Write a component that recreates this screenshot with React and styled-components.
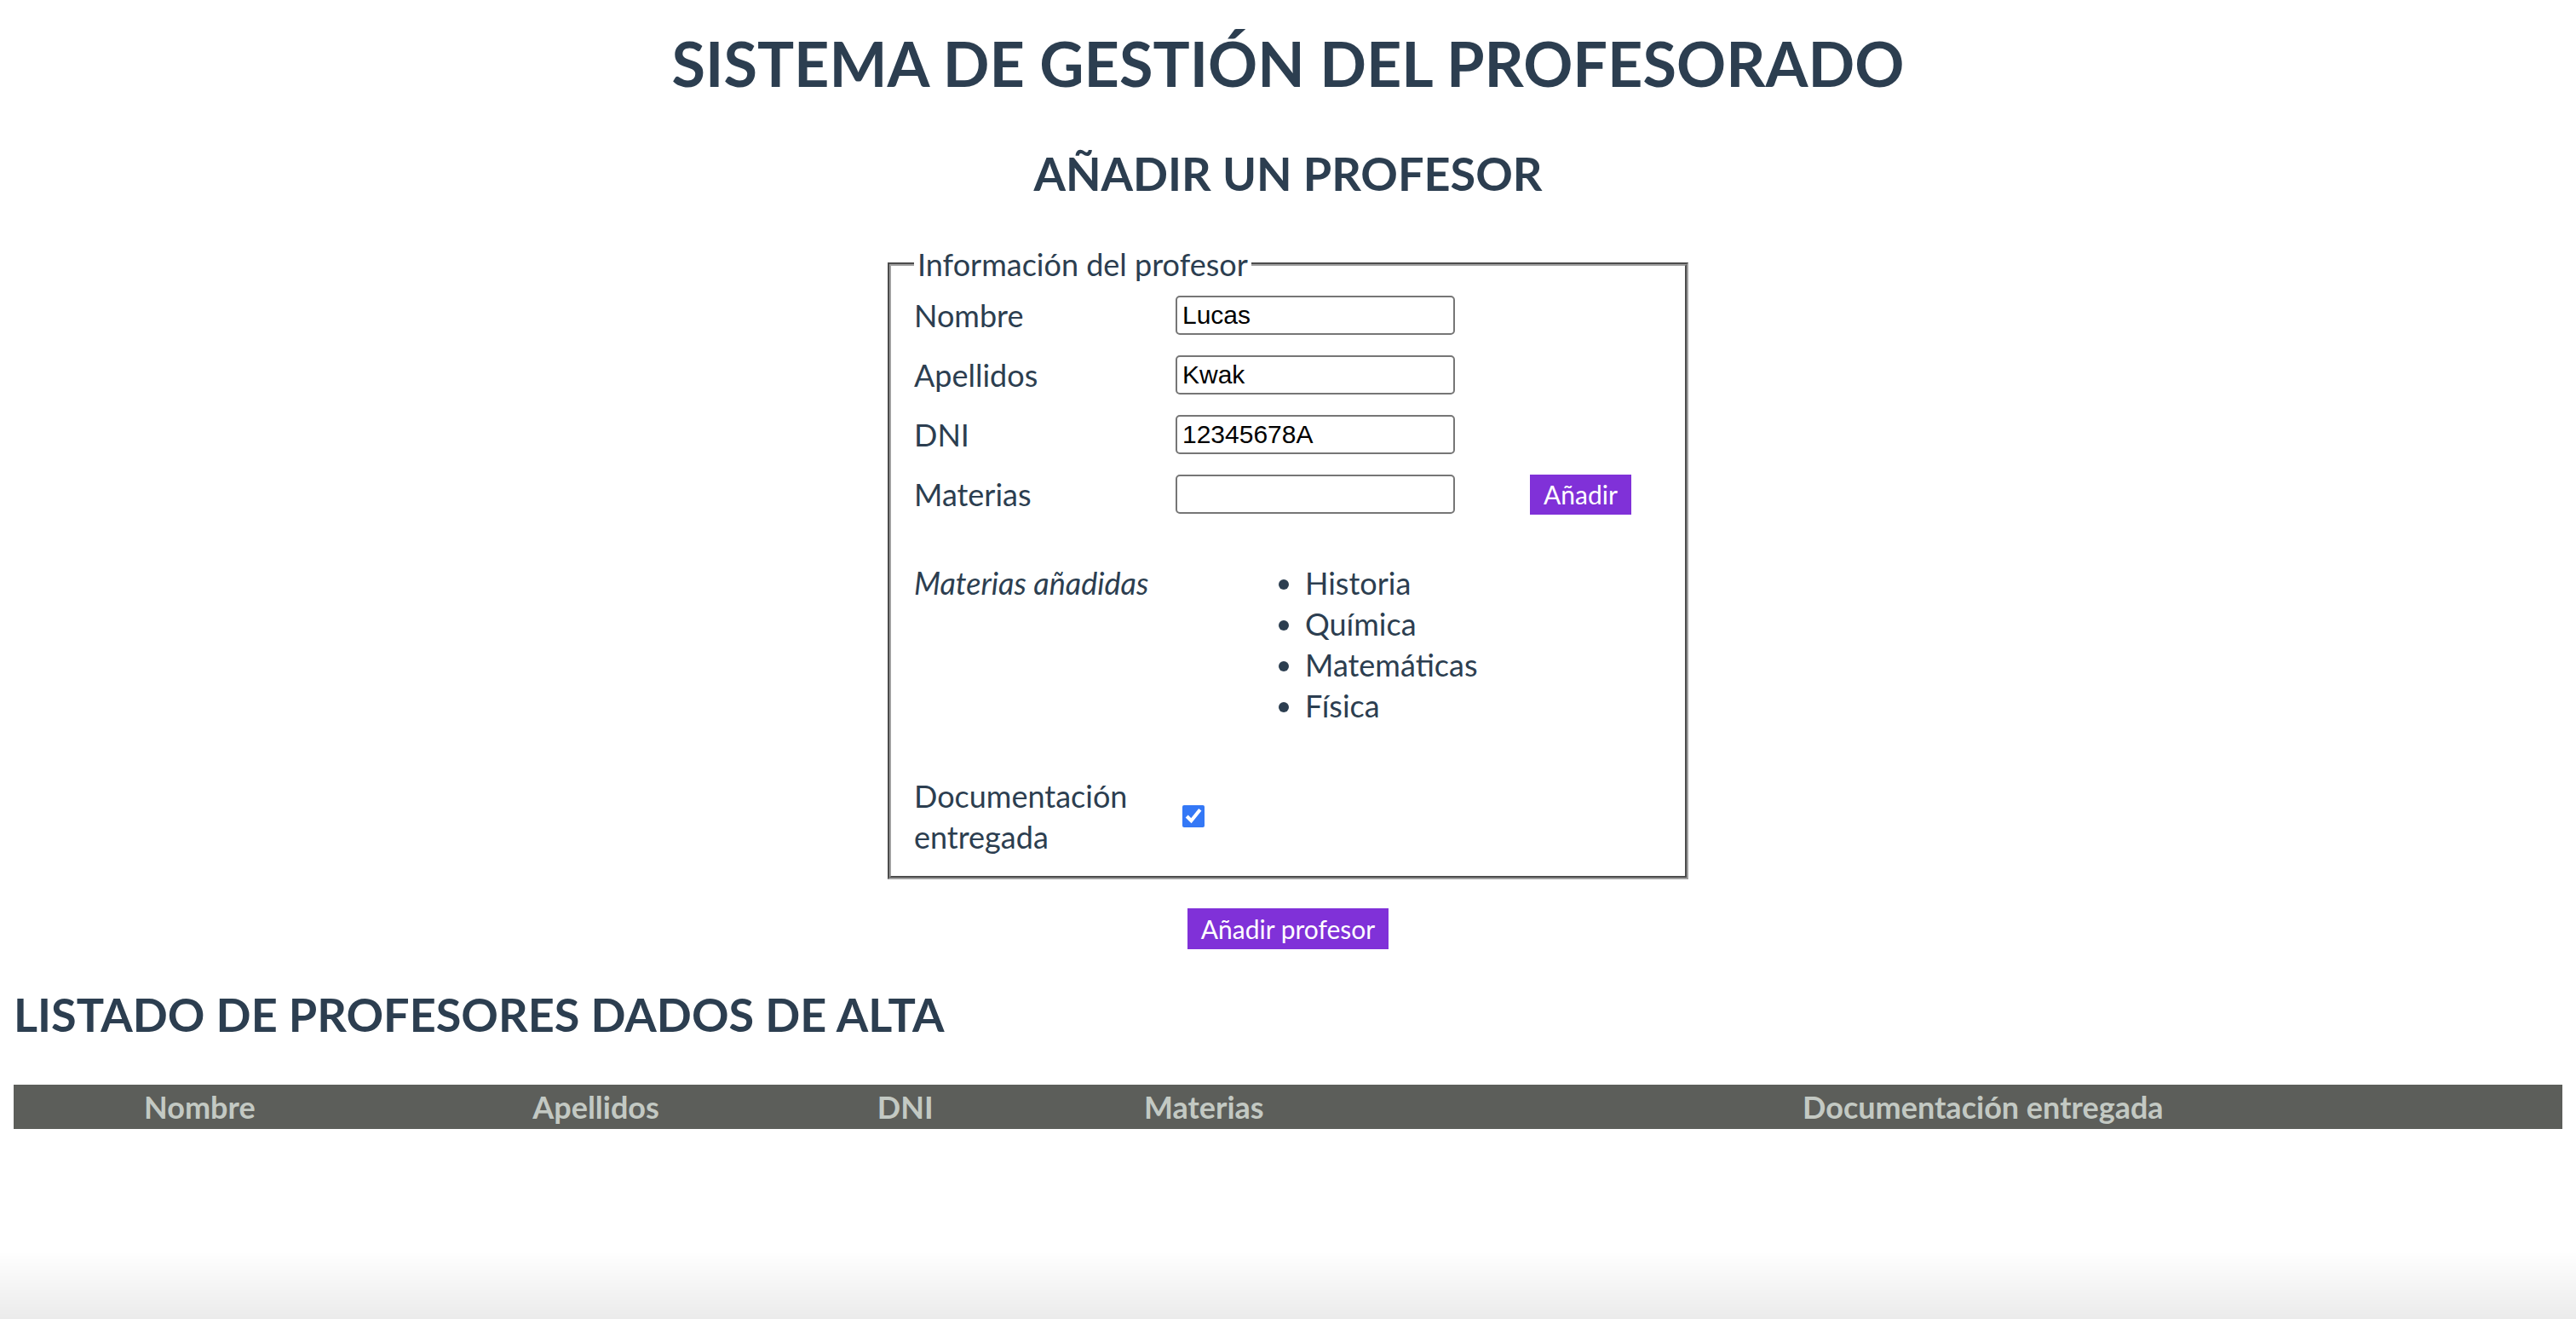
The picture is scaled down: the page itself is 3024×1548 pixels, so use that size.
import React from "react";
import styled, { createGlobalStyle } from "styled-components";

const Global = createGlobalStyle`
  html, body { background: #ffffff; }
  body {
    margin: 16px;
    font-family: "Lato", "Noto Sans", sans-serif;
    color: #2c3e50;
    font-size: 36px;
    line-height: 48px;
  }
  * { box-sizing: border-box; }
`;

const Page = styled.div`
  display: flex;
  flex-direction: column;
`;

const Title = styled.h1`
  margin: 10px 0 0;
  text-align: center;
  font-size: 72px;
  line-height: 96px;
  font-weight: 700;
`;

const Heading = styled.h2`
  margin: ${(p) => p.$mt}px 0 0;
  text-align: ${(p) => (p.$left ? "left" : "center")};
  font-size: 54px;
  line-height: 72px;
  font-weight: 700;
`;

const Form = styled.form`
  display: flex;
  flex-direction: column;
  align-items: center;
`;

const Fieldset = styled.fieldset`
  width: 940px;
  margin: 46px 0 0;
  padding: 12px 27px 22px;
  border: 4px groove #a0a0a0;
`;

const Legend = styled.legend`
  padding: 0 4px;
  font-size: 36px;
  line-height: 48px;
`;

const Rows = styled.div`
  display: grid;
  grid-template-columns: 307px 328px auto;
  row-gap: 22px;
  align-items: center;
`;

const Label = styled.label`
  font-size: 36px;
  line-height: 48px;
  font-style: ${(p) => (p.$italic ? "italic" : "normal")};
`;

const Input = styled.input`
  width: 328px;
  height: 46px;
  margin: 0;
  padding: 0 6px;
  border: 2px solid #767676;
  border-radius: 5px;
  font-family: "Liberation Sans", Arial, sans-serif;
  font-size: 30px;
  color: #000;
  background: #fff;
`;

const Button = styled.button`
  height: ${(p) => p.$h}px;
  padding: 0 16px;
  border: none;
  background: #8031d8;
  color: #ffffff;
  font-family: "Lato", "Noto Sans", sans-serif;
  font-size: 30px;
  line-height: 1;
  cursor: pointer;
`;

const SmallButton = styled(Button)`
  justify-self: start;
  margin-left: 88px;
`;

const SubmitButton = styled(Button)`
  margin-top: 34px;
`;

const AddedRow = styled.div`
  display: grid;
  grid-template-columns: 307px 1fr;
  margin-top: 56px;
  align-items: start;
`;

const List = styled.ul`
  margin: 0;
  padding-left: 152px;
  list-style: disc;
  line-height: 48px;
`;

const DocRow = styled.div`
  display: grid;
  grid-template-columns: 307px auto;
  margin-top: 58px;
  align-items: center;
`;

const Check = styled.input`
  width: 26px;
  height: 26px;
  margin: 0 0 0 8px;
  accent-color: #3478f6;
  justify-self: start;
`;

const Table = styled.table`
  width: 100%;
  margin-top: 46px;
  border-collapse: collapse;
`;

const Th = styled.th`
  background: #5c5e5a;
  color: #c3c9c3;
  font-size: 36px;
  line-height: 48px;
  font-weight: 700;
  padding: 2px 4px;
  text-align: center;
`;

const BottomShade = styled.div`
  position: fixed;
  left: 0;
  right: 0;
  bottom: 0;
  height: 80px;
  pointer-events: none;
  background: linear-gradient(to bottom, rgba(0, 0, 0, 0), rgba(0, 0, 0, 0.08));
`;

const fields = [
  { id: "nombre", label: "Nombre", value: "Lucas" },
  { id: "apellidos", label: "Apellidos", value: "Kwak" },
  { id: "dni", label: "DNI", value: "12345678A" },
];

const materias = ["Historia", "Química", "Matemáticas", "Física"];
const columns = ["Nombre", "Apellidos", "DNI", "Materias", "Documentación entregada"];

export default function App() {
  return (
    <Page>
      <Global />
      <Title>SISTEMA DE GESTIÓN DEL PROFESORADO</Title>
      <Heading $mt={46}>AÑADIR UN PROFESOR</Heading>
      <Form onSubmit={(e) => e.preventDefault()}>
        <Fieldset>
          <Legend>Información del profesor</Legend>
          <Rows>
            {fields.map((f) => (
              <React.Fragment key={f.id}>
                <Label htmlFor={f.id}>{f.label}</Label>
                <Input id={f.id} type="text" defaultValue={f.value} />
                <span />
              </React.Fragment>
            ))}
            <Label htmlFor="materias">Materias</Label>
            <Input id="materias" type="text" defaultValue="" />
            <SmallButton type="button" $h={47}>Añadir</SmallButton>
          </Rows>
          <AddedRow>
            <Label $italic>Materias añadidas</Label>
            <List>
              {materias.map((m) => (
                <li key={m}>{m}</li>
              ))}
            </List>
          </AddedRow>
          <DocRow>
            <Label htmlFor="doc">Documentación entregada</Label>
            <Check id="doc" type="checkbox" defaultChecked />
          </DocRow>
        </Fieldset>
        <SubmitButton type="submit" $h={48}>Añadir profesor</SubmitButton>
      </Form>
      <Heading $mt={41} $left>LISTADO DE PROFESORES DADOS DE ALTA</Heading>
      <Table>
        <thead>
          <tr>
            {columns.map((c) => (
              <Th key={c}>{c}</Th>
            ))}
          </tr>
        </thead>
      </Table>
      <BottomShade />
    </Page>
  );
}
